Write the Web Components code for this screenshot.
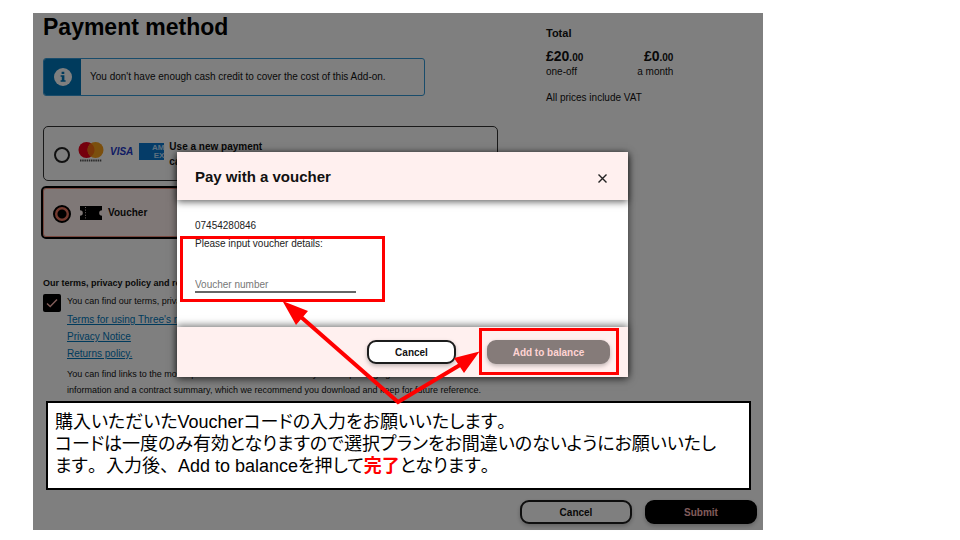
<!DOCTYPE html>
<html lang="en">
<head>
<meta charset="utf-8">
<meta name="viewport" content="width=device-width, initial-scale=1">
<title>Payment method</title>
<style>
    body {
        margin: 0;
        background: #fff;
        font-family: "Liberation Sans", Arial, sans-serif;
    }
</style>
</head>
<body>
<payment-page></payment-page>

<script>
class BaseElement extends HTMLElement {
    constructor() {
        super()
        this.attachShadow({ mode: "open" })
    }

    connectedCallback() {
        const template = document.createElement('template')
        template.innerHTML = `<style>:host, * { box-sizing: border-box; }</style>${this.getStyles()}${this.getTemplate()}`
        this.shadowRoot.replaceChildren(template.content.cloneNode(true))
    }
}

class InfoAlert extends BaseElement {
    getTemplate() {
        return `
            <div class="icon">
                <svg width="18" height="18" viewBox="0 0 18 18" aria-hidden="true">
                    <circle cx="9" cy="9" r="9" fill="#fff"/>
                    <path d="M7.6 3.8h2.7v2.3H7.6zM6.6 7.3h3.8v4.9h1.2v1.5H6.6v-1.5h1.2V8.8H6.6z" fill="#0077bb"/>
                </svg>
            </div>
            <p><slot></slot></p>
        `
    }

    getStyles() {
        return `
        <style>
            :host {
                display: flex;
                width: 84%;
                min-height: 38px;
                border: 1px solid #3399d6;
                border-radius: 3px;
                overflow: hidden;
            }
            .icon {
                display: flex;
                align-items: center;
                justify-content: center;
                flex: 0 0 37px;
                background-color: #0077bb;
            }
            p {
                margin: 0;
                padding: 0 9px;
                align-self: center;
                font-size: 10px;
                line-height: 14px;
                color: #111;
            }
        </style>
        `
    }
}

class PaymentOption extends BaseElement {
    getTemplate() {
        const checked = this.hasAttribute('selected') ? 'checked' : ''
        return `
            <label>
                <input type="radio" name="method" ${checked}>
                <slot name="logos"></slot>
                <span class="text"><slot></slot></span>
            </label>
        `
    }

    getStyles() {
        return `
        <style>
            :host {
                display: block;
                border: 1px solid #333;
                border-radius: 5px;
            }
            :host([selected]) {
                margin: 0 -2px;
                border: 2px solid #000;
                background-color: #fff0ee;
                box-shadow: inset 0 0 0 1px #f0907e;
            }
            label {
                display: flex;
                align-items: center;
                min-height: 53px;
                padding: 0 10px;
            }
            :host([selected]) label {
                min-height: 49px;
            }
            input {
                appearance: none;
                flex: none;
                width: 16px;
                height: 16px;
                margin: 2px 8px 0 0;
                border: 2px solid #222;
                border-radius: 50%;
            }
            :host([selected]) input {
                width: 18px;
                height: 18px;
                margin-right: 9px;
                border-color: #000;
                background: radial-gradient(circle, #000 4px, #e8745f 5px);
            }
            .text {
                align-self: center;
                font-size: 10px;
                line-height: 15px;
                font-weight: bold;
                color: #111;
            }
        </style>
        `
    }
}

class CardLogos extends BaseElement {
    getTemplate() {
        return `
            <svg width="26" height="22" viewBox="0 0 26 22" role="img" aria-label="Mastercard">
                <circle cx="8.5" cy="9" r="8" fill="#eb001b"/>
                <circle cx="17.5" cy="9" r="8" fill="#f79e1b"/>
                <path d="M13 2.4a8 8 0 0 1 0 13.2a8 8 0 0 1 0-13.2z" fill="#f26a12"/>
                <path d="M2 19.500h22" stroke="#555" stroke-width="2" stroke-dasharray="1.5 .7"/>
            </svg>
            <span class="visa">VISA</span>
            <span class="amex"><span>AM</span><span>EX</span></span>
        `
    }

    getStyles() {
        return `
        <style>
            :host {
                display: flex;
                align-items: center;
                margin: 0 5px 4px 0;
            }
            .visa {
                margin: 0 6px;
                font-size: 10px;
                font-weight: bold;
                font-style: italic;
                color: #2338c8;
            }
            .amex {
                display: flex;
                flex-direction: column;
                align-items: flex-end;
                justify-content: center;
                width: 25px;
                height: 17px;
                font-size: 8px;
                line-height: 8px;
                font-weight: bold;
                color: #bfe0ff;
                background-color: #0a78d0;
            }
        </style>
        `
    }
}

class TicketIcon extends BaseElement {
    getTemplate() {
        return `
            <svg width="22" height="14" viewBox="0 0 22 14" aria-hidden="true">
                <path d="M0 0h22v4.2a2.8 2.8 0 0 0 0 5.6V14H0V9.8a2.8 2.8 0 0 0 0-5.6z"/>
                <path d="M5.5 1v12" stroke="#d8c8c6" stroke-dasharray="1 1.6"/>
            </svg>
        `
    }

    getStyles() {
        return `
        <style>
            :host {
                display: flex;
                margin-right: 6px;
            }
        </style>
        `
    }
}

class OrderTotal extends BaseElement {
    getTemplate() {
        return `
            <h2>Total</h2>
            <div class="prices">
                <div><div class="price">£20<small>.00</small></div>one-off</div>
                <div class="monthly"><div class="price">£0<small>.00</small></div>a month</div>
            </div>
            <p>All prices include VAT</p>
        `
    }

    getStyles() {
        return `
        <style>
            :host {
                display: block;
                padding-top: 12px;
                font-size: 10px;
                line-height: 16px;
                color: #111;
            }
            h2 {
                margin: 0 0 7px;
                font-size: 11px;
                line-height: 16px;
            }
            .prices {
                display: flex;
                gap: 54px;
            }
            .monthly {
                text-align: right;
            }
            .price {
                font-size: 14px;
                font-weight: bold;
            }
            small {
                font-size: 10px;
                line-height: 10px;
            }
            p {
                margin: 10px 0 0;
            }
        </style>
        `
    }
}

class TermsBlock extends BaseElement {
    getTemplate() {
        return `
            <h2>Our terms, privacy policy and returns policy</h2>
            <div class="row">
                <input type="checkbox" id="agree" checked>
                <div>
                    <label for="agree">You can find our terms, privacy notice and returns policy here:</label>
                    <a href="#terms">Terms for using Three's network</a>
                    <a href="#privacy">Privacy Notice</a>
                    <a href="#returns">Returns policy.</a>
                    <p>You can find links to the most up-to-date versions of these on your sim packaging. There are also links to contract<br>information and a contract summary, which we recommend you download and keep for future reference.</p>
                </div>
            </div>
        `
    }

    getStyles() {
        return `
        <style>
            :host {
                display: block;
                font-size: 9px;
                line-height: 16px;
                color: #111;
            }
            h2 {
                margin: 0;
                font-size: 9px;
                line-height: 16px;
            }
            .row {
                display: flex;
                gap: 6px;
            }
            input {
                appearance: none;
                flex: none;
                width: 18px;
                height: 18px;
                margin: 3px 0 0;
                border-radius: 2px;
                background: #000 url('data:image/svg+xml,<svg xmlns="http://www.w3.org/2000/svg" viewBox="0 0 18 18"><path d="M4 9.5l3.2 3L14 5.5" fill="none" stroke="%23ffb8b0" stroke-width="1.5"/></svg>');
            }
            label {
                display: block;
                line-height: 20px;
            }
            a {
                display: block;
                width: fit-content;
                font-size: 10px;
                line-height: 17px;
                color: #0077bb;
            }
            p {
                margin: 4px 0 0;
                white-space: nowrap;
            }
        </style>
        `
    }
}

class ActionButton extends BaseElement {
    getTemplate() {
        return `<button type="button"><slot></slot></button>`
    }

    getStyles() {
        return `
        <style>
            :host {
                display: block;
                width: 112px;
            }
            button {
                display: block;
                width: 100%;
                height: 24px;
                padding: 0;
                border: 2px solid #1c1c1c;
                border-radius: 9px;
                background-color: #fff;
                box-shadow: 0 2px 4px rgba(0, 0, 0, 0.25);
                font: bold 10px "Liberation Sans", Arial, sans-serif;
                color: #111;
            }
            :host([kind="primary"]) button {
                border-color: #000;
                background-color: #000;
                color: #ffb8b8;
            }
            :host([kind="muted"]) button {
                border-color: #857b79;
                background-color: #857b79;
                color: #ffd3d3;
            }
        </style>
        `
    }
}

class VoucherDialog extends BaseElement {
    getTemplate() {
        return `
            <section role="dialog" aria-labelledby="title">
                <header>
                    <h2 id="title">Pay with a voucher</h2>
                    <button type="button" aria-label="Close">
                        <svg width="9" height="9" viewBox="0 0 9 9" aria-hidden="true">
                            <path d="M.5 .5l8 8M8.5 .5l-8 8" stroke="#222" stroke-width="1.4"/>
                        </svg>
                    </button>
                </header>
                <div class="content">
                    <div>07454280846</div>
                    <label for="voucher">Please input voucher details:</label>
                    <input id="voucher" type="text" placeholder="Voucher number">
                </div>
                <footer>
                    <action-button class="cancel">Cancel</action-button>
                    <action-button class="add" kind="muted">Add to balance</action-button>
                </footer>
            </section>
        `
    }

    getStyles() {
        return `
        <style>
            :host {
                display: block;
                background-color: #fff;
                box-shadow: 0 2px 8px rgba(0, 0, 0, 0.6);
                color: #222;
            }
            header, footer {
                display: flex;
                align-items: center;
                padding: 0 18px;
                background-color: #fff0ef;
            }
            header {
                justify-content: space-between;
                min-height: 48px;
                box-shadow: 0 2px 7px rgba(0, 0, 0, 0.6);
            }
            h2 {
                margin: 0;
                padding-top: 2px;
                font-size: 15px;
                line-height: 20px;
                color: #111;
            }
            header button {
                display: flex;
                padding: 3px;
                margin-top: 4px;
                border: 0;
                background: none;
            }
            .content {
                padding: 17px 18px 34px;
                font-size: 10px;
                line-height: 18px;
            }
            label {
                display: block;
            }
            input {
                display: block;
                width: 161px;
                height: 15px;
                margin-top: 25px;
                padding: 0;
                border: 0;
                border-bottom: 2px solid #666;
                border-radius: 0;
                background: none;
                font: 10px "Liberation Sans", Arial, sans-serif;
            }
            input::placeholder {
                color: #777;
            }
            footer {
                justify-content: flex-end;
                gap: 31px;
                min-height: 50px;
                box-shadow: 0 -2px 7px rgba(0, 0, 0, 0.5);
            }
            .cancel {
                width: 89px;
            }
            .add {
                width: 123px;
            }
        </style>
        `
    }
}

class GuideNote extends BaseElement {
    getTemplate() {
        return `<p><slot></slot></p>`
    }

    getStyles() {
        return `
        <style>
            :host {
                display: block;
                padding: 8px 7px 11px;
                border: 2px solid #000;
                background-color: #fff;
                color: #000;
            }
            p {
                margin: 0;
                font-family: "Liberation Sans", "Noto Sans CJK JP", sans-serif;
                font-size: 18px;
                line-height: 22px;
                font-feature-settings: "palt";
            }
            ::slotted(strong) {
                color: #f00;
            }
            /* kana are set proportionally, punctuation keeps its full width */
            ::slotted(span) {
                font-feature-settings: normal;
            }
        </style>
        `
    }
}

class GuideMarks extends BaseElement {
    getTemplate() {
        return `
            <svg viewBox="33 13 730 517" preserveAspectRatio="none" aria-hidden="true">
                <g fill="none" stroke="#f00">
                    <rect x="181.5" y="237.5" width="202" height="63" stroke-width="3"/>
                    <rect x="480.5" y="329.5" width="137" height="44" stroke-width="3"/>
                    <path d="M301 317L398 402L460 365" stroke-width="4"/>
                </g>
                <path d="M282.500 301L308 311L296 325zM479.500 351.500L454 358L464 373z" fill="#f00"/>
            </svg>
        `
    }

    getStyles() {
        return `
        <style>
            :host {
                display: block;
                pointer-events: none;
            }
            svg {
                display: block;
                width: 100%;
                height: 100%;
            }
        </style>
        `
    }
}

class PaymentPage extends BaseElement {
    getTemplate() {
        return `
            <main>
                <div class="columns">
                    <div class="methods">
                        <h1>Payment method</h1>
                        <info-alert>You don't have enough cash credit to cover the cost of this Add-on.</info-alert>
                        <div class="options">
                            <payment-option>
                                <card-logos slot="logos"></card-logos>
                                Use a new payment<br>card
                            </payment-option>
                            <payment-option selected>
                                <ticket-icon slot="logos"></ticket-icon>
                                Voucher
                            </payment-option>
                        </div>
                        <terms-block></terms-block>
                    </div>
                    <order-total></order-total>
                </div>
                <div class="actions">
                    <action-button>Cancel</action-button>
                    <action-button kind="primary">Submit</action-button>
                </div>
                <div class="backdrop"></div>
                <voucher-dialog></voucher-dialog>
                <guide-note lang="ja">購入いただいたVoucherコードの入力をお願いいたします<span>。</span><br>コードは一度のみ有効となりますので選択プランをお間違いのないようにお願いいたし<br>ます<span>。</span>入力後<span>、</span>Add to balanceを押して<strong>完了</strong>となります<span>。</span></guide-note>
                <guide-marks></guide-marks>
            </main>
        `
    }

    getStyles() {
        return `
        <style>
            :host {
                display: flex;
                min-height: 100vh;
                padding: 13px 197px 10px 33px;
            }
            main {
                position: relative;
                display: flex;
                flex-direction: column;
                flex: 1;
                padding: 0 6px 6px 10px;
            }
            .columns {
                display: grid;
                grid-template-columns: minmax(0, 455fr) minmax(0, 211fr);
                gap: 48px;
            }
            h1 {
                margin: 0 0 17px;
                font-size: 23px;
                line-height: 28px;
                color: #000;
            }
            .options {
                display: flex;
                flex-direction: column;
                gap: 5px;
                margin: 30px 0 36px;
            }
            .actions {
                display: flex;
                justify-content: flex-end;
                gap: 13px;
                margin-top: auto;
            }
            /* layers over the dimmed page */
            .backdrop, voucher-dialog, guide-note, guide-marks {
                position: absolute;
            }
            .backdrop, guide-marks {
                inset: 0;
            }
            .backdrop {
                background-color: rgba(0, 0, 0, 0.5);
            }
            voucher-dialog {
                top: 139px;
                left: 144px;
                right: 135px;
            }
            guide-note {
                top: 388px;
                left: 13px;
                right: 12px;
            }
        </style>
        `
    }
}

customElements.define('info-alert', InfoAlert)
customElements.define('payment-option', PaymentOption)
customElements.define('card-logos', CardLogos)
customElements.define('ticket-icon', TicketIcon)
customElements.define('order-total', OrderTotal)
customElements.define('terms-block', TermsBlock)
customElements.define('action-button', ActionButton)
customElements.define('voucher-dialog', VoucherDialog)
customElements.define('guide-note', GuideNote)
customElements.define('guide-marks', GuideMarks)
customElements.define('payment-page', PaymentPage)
</script>
</body>
</html>
